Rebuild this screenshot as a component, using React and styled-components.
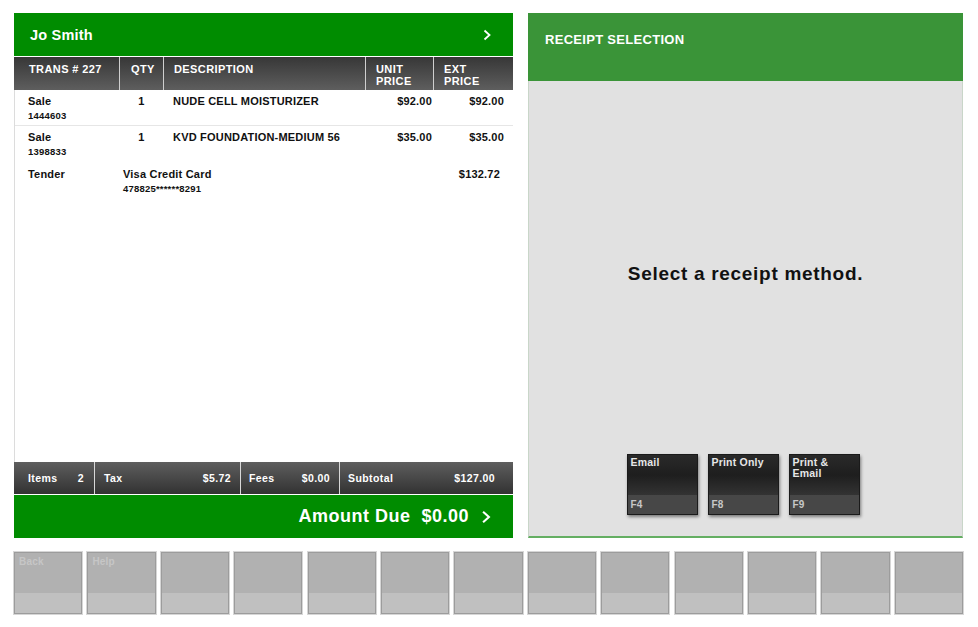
import React from 'react'
import styled, { createGlobalStyle } from 'styled-components'

const GlobalStyle = createGlobalStyle`
  body {
    margin: 0;
    background: #ffffff;
    font-family: "Liberation Sans", Arial, sans-serif;
    letter-spacing: 0.2px;
  }
`

const Page = styled.div`
  width: 978px;
  height: 627px;
  box-sizing: border-box;
  padding: 13px 15px 0 14px;
  display: flex;
  flex-direction: column;
  gap: 14px;
`

const MainRow = styled.div`
  display: flex;
  gap: 15px;
  height: 525px;
`

const LeftPanel = styled.div`
  width: 499px;
  display: flex;
  flex-direction: column;
`

const CustomerBar = styled.div`
  height: 43px;
  background: #008c00;
  color: #fff;
  display: flex;
  align-items: center;
  justify-content: space-between;
  padding: 0 20px 0 16px;
  font-weight: bold;
  font-size: 14.5px;
  box-sizing: border-box;
  margin-bottom: 1px;
`

const Chevron = styled.svg`
  width: ${p => p.size}px;
  height: ${p => p.size}px;
  display: block;
`

const TableHead = styled.div`
  height: 33px;
  display: grid;
  grid-template-columns: 105px 44px 202px 68px 80px;
  background: linear-gradient(#373737, #5e5e5e);
`

const HeadCell = styled.div`
  color: #fff;
  font-size: 11px;
  font-weight: bold;
  line-height: 12px;
  letter-spacing: 0.4px;
  padding: 6px 0 0 ${p => p.pad || 10}px;
  border-left: ${p => (p.first ? 'none' : '1px solid #cfcfcf')};
  text-align: ${p => p.align || 'left'};
`

const TableBody = styled.div`
  flex: 1;
  border-left: 1px solid #dcdcdc;
`

const ItemRow = styled.div`
  display: grid;
  grid-template-columns: 104px 44px 202px 68px 80px;
  height: 36px;
  box-sizing: border-box;
  border-bottom: ${p => (p.divided ? '1px solid #e6e6e6' : 'none')};
  padding-top: 5px;
  font-size: 11px;
  font-weight: bold;
  color: #111;
`

const Cell = styled.div`
  text-align: ${p => p.align || 'left'};
  padding: ${p => p.pad || '0'};
  line-height: 13px;
`

const SubText = styled.div`
  font-size: 9.5px;
  line-height: 16px;
`

const TenderRow = styled.div`
  display: grid;
  grid-template-columns: 104px 1fr 100px;
  padding-top: 6px;
  font-size: 11px;
  font-weight: bold;
  color: #111;
`

const SummaryBar = styled.div`
  height: 32px;
  display: grid;
  grid-template-columns: 80px 146px 99px 174px;
  background: linear-gradient(#5e5e5e, #323232);
  margin-bottom: 1px;
`

const SummaryCell = styled.div`
  display: flex;
  align-items: center;
  justify-content: space-between;
  color: #fff;
  font-size: 10.5px;
  font-weight: bold;
  letter-spacing: 0.4px;
  padding: 0 ${p => p.right || 9}px 0 ${p => p.left || 9}px;
  border-left: ${p => (p.first ? 'none' : '1px solid #d8d8d8')};
`

const AmountBar = styled.div`
  height: 43px;
  background: #008c00;
  color: #fff;
  display: flex;
  align-items: center;
  justify-content: flex-end;
  gap: 10px;
  padding-right: 20px;
  font-size: 18px;
  letter-spacing: 0.5px;
  font-weight: bold;
`

const RightPanel = styled.div`
  width: 435px;
  display: flex;
  flex-direction: column;
`

const ReceiptHeader = styled.div`
  height: 68px;
  box-sizing: border-box;
  background: #3a9438;
  color: #fff;
  font-size: 13px;
  font-weight: bold;
  letter-spacing: 0.3px;
  padding: 19px 0 0 17px;
`

const ReceiptBody = styled.div`
  flex: 1;
  background: #e1e1e1;
  border-left: 1px solid #c9d6c9;
  border-right: 1px solid #c9d6c9;
  border-bottom: 2px solid #64ae62;
  display: flex;
  flex-direction: column;
  padding-bottom: 21px;
`

const Prompt = styled.div`
  flex: 1;
  display: flex;
  align-items: center;
  justify-content: center;
  padding-top: 12px;
  font-size: 19px;
  letter-spacing: 0.7px;
  font-weight: bold;
  color: #111;
`

const ChoiceRow = styled.div`
  display: flex;
  justify-content: center;
  gap: 10px;
  padding-right: 5px;
`

const ChoiceKey = styled.div`
  width: 71px;
  height: 61px;
  display: flex;
  flex-direction: column;
  box-shadow: 1px 2px 3px rgba(0, 0, 0, 0.45);
  border: 1px solid #1a1a1a;
  box-sizing: border-box;
`

const ChoiceTop = styled.div`
  flex: 1;
  background: linear-gradient(#2a2a2a, #1e1e1e 50%, #333);
  color: #e6e6e6;
  font-size: 10.5px;
  font-weight: bold;
  line-height: 11px;
  padding: 2px 3px;
  white-space: pre-line;
`

const ChoiceFn = styled.div`
  height: 19px;
  background: #474747;
  color: #c8c8c8;
  font-size: 10px;
  font-weight: bold;
  padding: 4px 3px 0;
  box-sizing: border-box;
`

const FKeyRow = styled.div`
  display: flex;
  gap: 5.3px;
  height: 62px;
`

const FKey = styled.div`
  flex: 1;
  display: flex;
  flex-direction: column;
  border: 1px solid #9c9c9c;
  outline: 1px solid #d6d6d6;
  box-sizing: border-box;
`

const FKeyTop = styled.div`
  flex: 1;
  background: #b1b1b1;
  color: #c6c6c6;
  font-size: 10px;
  font-weight: bold;
  padding: 3px 4px;
`

const FKeyBottom = styled.div`
  height: 20px;
  background: #c0c0c0;
`

function ChevronIcon({ size }) {
  return (
    <Chevron size={size} viewBox="0 0 12 12">
      <path d="M3.5 1.5 L8.5 6 L3.5 10.5" fill="none" stroke="#fff" strokeWidth="1.8" />
    </Chevron>
  )
}

const items = [
  { type: 'Sale', sku: '1444603', qty: '1', desc: 'NUDE CELL MOISTURIZER', unit: '$92.00', ext: '$92.00' },
  { type: 'Sale', sku: '1398833', qty: '1', desc: 'KVD FOUNDATION-MEDIUM 56', unit: '$35.00', ext: '$35.00' },
]

const choices = [
  { label: 'Email', fn: 'F4' },
  { label: 'Print Only', fn: 'F8' },
  { label: 'Print &\nEmail', fn: 'F9' },
]

const fkeys = ['Back', 'Help', '', '', '', '', '', '', '', '', '', '', '']

export default function App() {
  return (
    <>
      <GlobalStyle />
      <Page>
        <MainRow>
          <LeftPanel>
            <CustomerBar>
              <span>Jo Smith</span>
              <ChevronIcon size={12} />
            </CustomerBar>
            <TableHead>
              <HeadCell first pad={15}>TRANS # 227</HeadCell>
              <HeadCell pad={11}>QTY</HeadCell>
              <HeadCell>DESCRIPTION</HeadCell>
              <HeadCell>UNIT<br />PRICE</HeadCell>
              <HeadCell>EXT<br />PRICE</HeadCell>
            </TableHead>
            <TableBody>
              {items.map((it, i) => (
                <ItemRow key={it.sku} divided={i === 0}>
                  <Cell pad="0 0 0 13px">
                    {it.type}
                    <SubText>{it.sku}</SubText>
                  </Cell>
                  <Cell align="center" pad="0 0 0 1px">{it.qty}</Cell>
                  <Cell pad="0 0 0 10px">{it.desc}</Cell>
                  <Cell align="right" pad="0 1px 0 0">{it.unit}</Cell>
                  <Cell align="right" pad="0 9px 0 0">{it.ext}</Cell>
                </ItemRow>
              ))}
              <TenderRow>
                <Cell pad="0 0 0 13px">Tender</Cell>
                <Cell pad="0 0 0 4px">
                  Visa Credit Card
                  <SubText>478825******8291</SubText>
                </Cell>
                <Cell align="right" pad="0 13px 0 0">$132.72</Cell>
              </TenderRow>
            </TableBody>
            <SummaryBar>
              <SummaryCell first left={14} right={10}><span>Items</span><span>2</span></SummaryCell>
              <SummaryCell><span>Tax</span><span>$5.72</span></SummaryCell>
              <SummaryCell left={8}><span>Fees</span><span>$0.00</span></SummaryCell>
              <SummaryCell left={8} right={18}><span>Subtotal</span><span>$127.00</span></SummaryCell>
            </SummaryBar>
            <AmountBar>
              <span>Amount Due&nbsp;&nbsp;$0.00</span>
              <ChevronIcon size={14} />
            </AmountBar>
          </LeftPanel>
          <RightPanel>
            <ReceiptHeader>RECEIPT SELECTION</ReceiptHeader>
            <ReceiptBody>
              <Prompt>Select a receipt method.</Prompt>
              <ChoiceRow>
                {choices.map(c => (
                  <ChoiceKey key={c.fn}>
                    <ChoiceTop>{c.label}</ChoiceTop>
                    <ChoiceFn>{c.fn}</ChoiceFn>
                  </ChoiceKey>
                ))}
              </ChoiceRow>
            </ReceiptBody>
          </RightPanel>
        </MainRow>
        <FKeyRow>
          {fkeys.map((k, i) => (
            <FKey key={i}>
              <FKeyTop>{k}</FKeyTop>
              <FKeyBottom />
            </FKey>
          ))}
        </FKeyRow>
      </Page>
    </>
  )
}
